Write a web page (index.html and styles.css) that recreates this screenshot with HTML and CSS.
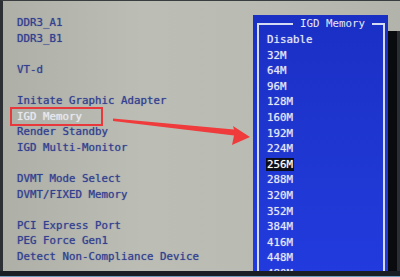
FILE: index.html
```html
<!DOCTYPE html>
<html lang="en">
<head>
    <meta charset="UTF-8">
    <title>IGD Memory</title>
    <link rel="stylesheet" href="styles.css">
</head>
<body>
    <div class="monitor">
        <div class="screen">
            <!-- left menu -->
            <div class="menu">
                <div class="item">DDR3_A1</div>
                <div class="item">DDR3_B1</div>
                <div class="item blank"></div>
                <div class="item">VT-d</div>
                <div class="item blank"></div>
                <div class="item">Initate Graphic Adapter</div>
                <div class="item sel">IGD Memory</div>
                <div class="item">Render Standby</div>
                <div class="item">IGD Multi-Monitor</div>
                <div class="item blank"></div>
                <div class="item">DVMT Mode Select</div>
                <div class="item">DVMT/FIXED Memory</div>
                <div class="item blank"></div>
                <div class="item">PCI Express Port</div>
                <div class="item">PEG Force Gen1</div>
                <div class="item">Detect Non-Compliance Device</div>
            </div>

            <!-- popup list -->
            <div class="popup">
                <fieldset class="frame">
                    <legend class="popup-title">IGD Memory</legend>
                    <div class="opt">Disable</div>
                    <div class="opt">32M</div>
                    <div class="opt">64M</div>
                    <div class="opt">96M</div>
                    <div class="opt">128M</div>
                    <div class="opt">160M</div>
                    <div class="opt">192M</div>
                    <div class="opt">224M</div>
                    <div class="opt"><span class="cur">256M</span></div>
                    <div class="opt">288M</div>
                    <div class="opt">320M</div>
                    <div class="opt">352M</div>
                    <div class="opt">384M</div>
                    <div class="opt">416M</div>
                    <div class="opt">448M</div>
                    <div class="opt">480M</div>
                </fieldset>
            </div>

            <!-- red arrow -->
            <svg class="arrow" width="400" height="277" viewBox="0 0 400 277">
                <polygon points="113,118.5 234,129.5 233,126 250,137 232,145 234,135.5 113,121" fill="#ef3b3b"/>
            </svg>

            <div class="bezel-right"></div>
        </div>
        <div class="bezel-bottom"></div>
    </div>
</body>
</html>
```

FILE: styles.css
```css
body {
    margin: 0;
    padding: 0;
    background-color: #1c2026;
    font-family: 'DejaVu Sans Mono', 'Liberation Mono', monospace;
}

.monitor {
    width: 400px;
    height: 277px;
    display: flex;
    flex-direction: column;
    overflow: hidden;
}

.screen {
    flex: 1;
    position: relative;
    overflow: hidden;
    background: linear-gradient(90deg, #aeb0a8 0%, #bcbeb6 35%, #b9bbb3 70%, #b2b4ac 100%);
    border-top: 1px solid #3a3d40;
    border-left: 3px solid #2c3034;
}

/* 왼쪽 메뉴 */
.menu {
    padding: 14px 0 0 14px;
    font-size: 10.8px;
    line-height: 15.6px;
    color: #33408f;
    text-shadow: 0 0 1px rgba(51, 64, 143, 0.7);
}

.item {
    height: 15.6px;
    white-space: nowrap;
}

.item.sel {
    width: 84px;
    margin-left: -5px;
    padding-left: 5px;
    color: #e6e8f0;
    text-shadow: 0 0 1px rgba(255, 255, 255, 0.6);
    outline: 2px solid #e8383c;
}

/* 선택 팝업 */
.popup {
    position: absolute;
    left: 250px;
    top: 14px;
    width: 135px;
    height: 280px;
    background: linear-gradient(180deg, #1a2fc4 0%, #2038d4 60%, #223be0 100%);
}

.frame {
    margin: 0;
    margin-left: 4px;
    margin-right: 3px;
    padding: 0 0 0 8px;
    border: 2px solid #d6dbf4;
    height: 300px;
    min-width: 0;
}

.popup-title {
    margin-left: 26px;
    padding: 0 7px;
    font-size: 10.8px;
    line-height: 17px;
    color: #e4e7f6;
}

.opt {
    font-size: 10.8px;
    line-height: 15.6px;
    height: 15.6px;
    color: #e4e7f6;
    text-shadow: 0 0 1px rgba(255, 255, 255, 0.6);
}

.cur {
    background-color: #0b0d18;
    color: #ffffff;
    padding: 0 1px;
    margin-left: -1px;
}

.arrow {
    position: absolute;
    left: -3px;
    top: -1px;
}

/* 모니터 테두리 */
.bezel-right {
    position: absolute;
    right: 0;
    top: 30px;
    bottom: 0;
    width: 9px;
    background-color: #0a0b0e;
    border-right: 3px solid #2a2e34;
}

.bezel-bottom {
    height: 5px;
    background-color: #1a1e24;
    border-bottom: 1px solid #6f9cbc;
}
```
